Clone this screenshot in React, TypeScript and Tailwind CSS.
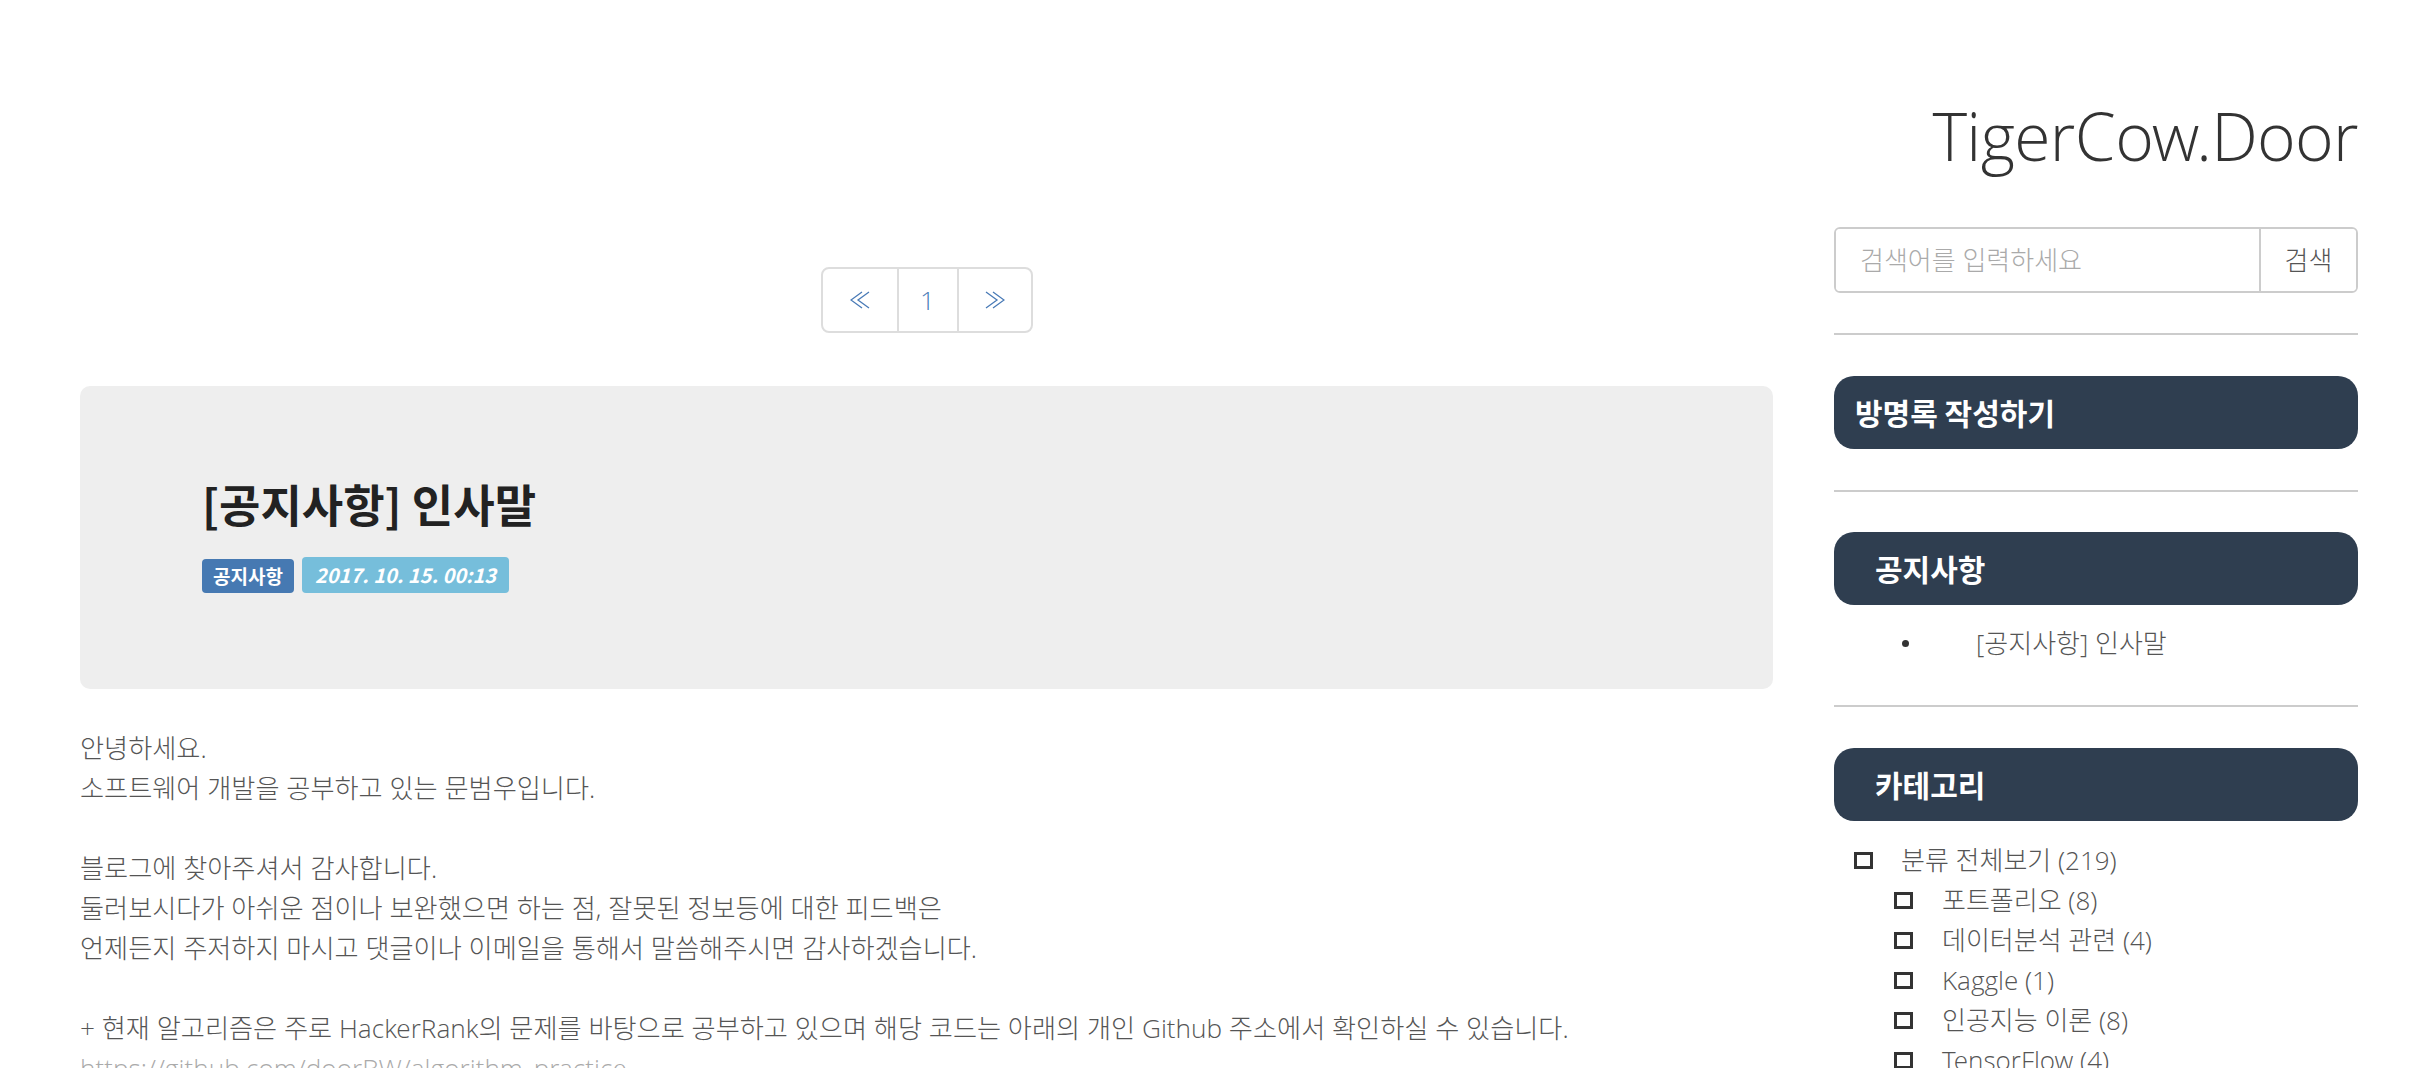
import React from "react";

const FONT = {
  fontFamily:
    '"Open Sans Light", "Open Sans", "Noto Sans CJK KR Light", "Noto Sans CJK KR DemiLight", "Noto Sans CJK KR", sans-serif',
};
const BOLD_KR = { fontFamily: '"Noto Sans CJK KR", sans-serif' };

function Chevrons({ dir }: { dir: "left" | "right" }) {
  const pts =
    dir === "left"
      ? ["12,1 1,9 12,17", "19,1 8,9 19,17"]
      : ["8,1 19,9 8,17", "1,1 12,9 1,17"];
  return (
    <svg width="20" height="18" viewBox="0 0 20 18" fill="none">
      {pts.map((p) => (
        <polyline key={p} points={p} stroke="#4a7bb7" strokeWidth="1.3" />
      ))}
    </svg>
  );
}

function PanelHeader({ title, indent }: { title: string; indent?: boolean }) {
  return (
    <div
      className={`h-[73px] rounded-[20px] bg-[#2f3e50] flex items-center text-white font-bold text-[30px] ${
        indent ? "pl-[41px]" : "pl-[21px]"
      }`}
      style={BOLD_KR}
    >
      {title}
    </div>
  );
}

function Box() {
  return <span className="inline-block w-[19px] h-[17px] border-[3px] border-[#333] shrink-0" />;
}

const categories: { label: string; sub?: boolean }[] = [
  { label: "분류 전체보기 (219)" },
  { label: "포트폴리오 (8)", sub: true },
  { label: "데이터분석 관련 (4)", sub: true },
  { label: "Kaggle (1)", sub: true },
  { label: "인공지능 이론 (8)", sub: true },
  { label: "TensorFlow (4)", sub: true },
  { label: "Python (12)", sub: true },
  { label: "알고리즘 (36)", sub: true },
];

export default function App() {
  return (
    <div className="w-[2412px] h-screen overflow-hidden bg-white text-[#555]" style={FONT}>
      <div className="flex pl-[80px] pr-[54px] gap-[61px]">
        {/* Main column */}
        <main className="flex-1 min-w-0 pt-[267px]">
          <div className="flex justify-center">
            <div className="flex h-[66px] border-2 border-[#ddd] rounded-[8px] overflow-hidden">
              <div className="w-[74px] flex items-center justify-center">
                <Chevrons dir="left" />
              </div>
              <div className="w-[60px] flex items-center justify-center border-l-2 border-[#ddd] text-[26px] font-light text-[#4a7bb7]">
                1
              </div>
              <div className="w-[74px] flex items-center justify-center border-l-2 border-[#ddd]">
                <Chevrons dir="right" />
              </div>
            </div>
          </div>

          <section className="mt-[53px] h-[303px] rounded-[10px] bg-[#eeeeee] pl-[122px] pt-[92px]">
            <h1 className="text-[45px] leading-[52px] font-bold text-[#222]" style={BOLD_KR}>
              [공지사항] 인사말
            </h1>
            <div className="mt-[27px] flex items-end gap-[8px]">
              <span
                className="h-[34px] px-[11px] rounded-[4px] bg-[#4679b2] text-white font-bold text-[19px] flex items-center"
                style={BOLD_KR}
              >
                공지사항
              </span>
              <span
                className="h-[36px] px-[13px] rounded-[4px] bg-[#76bedb] text-white font-bold italic text-[20px] flex items-center"
                style={BOLD_KR}
              >
                2017. 10. 15. 00:13
              </span>
            </div>
          </section>

          <article className="mt-[39px] text-[26.2px] leading-[40px] font-light text-[#555]">
            <p>안녕하세요.</p>
            <p>소프트웨어 개발을 공부하고 있는 문범우입니다.</p>
            <p>&nbsp;</p>
            <p>블로그에 찾아주셔서 감사합니다.</p>
            <p>둘러보시다가 아쉬운 점이나 보완했으면 하는 점, 잘못된 정보등에 대한 피드백은</p>
            <p>언제든지 주저하지 마시고 댓글이나 이메일을 통해서 말씀해주시면 감사하겠습니다.</p>
            <p>&nbsp;</p>
            <p>
              + 현재 알고리즘은 주로 HackerRank의 문제를 바탕으로 공부하고 있으며 해당 코드는 아래의 개인 Github 주소에서
              확인하실 수 있습니다.
            </p>
            <p className="text-[#aaa]">https://github.com/doorBW/algorithm_practice</p>
          </article>
        </main>

        {/* Sidebar */}
        <aside className="w-[524px] shrink-0 pt-[102px]">
          <div
            className="text-right text-[66px] leading-[66px] font-light text-[#333] tracking-[-0.7px]"
            style={{ fontFamily: '"Open Sans Light", "Open Sans", sans-serif' }}
          >
            TigerCow.Door
          </div>

          <div className="mt-[59px] flex h-[66px] border-2 border-[#ccc] rounded-[6px] overflow-hidden">
            <input
              className="flex-1 min-w-0 pl-[24px] text-[26px] font-light outline-none placeholder:text-[#aaa] bg-white"
              style={FONT}
              placeholder="검색어를 입력하세요"
            />
            <button className="w-[97px] border-l-2 border-[#ccc] text-[26px] font-light text-[#555] bg-white" style={FONT}>
              검색
            </button>
          </div>

          <div className="mt-[40px] h-[2px] bg-[#cccccc]" />

          <div className="mt-[41px]">
            <PanelHeader title="방명록 작성하기" />
          </div>

          <div className="mt-[41px] h-[2px] bg-[#cccccc]" />

          <div className="mt-[40px]">
            <PanelHeader title="공지사항" indent />
            <ul className="mt-[18px] text-[26px] leading-[40px] font-light text-[#555]">
              <li className="flex items-center">
                <span className="w-[73px] pl-[68px] shrink-0">
                  <span className="block w-[7px] h-[7px] rounded-full bg-[#333]" />
                </span>
                <span className="ml-[69px]">[공지사항] 인사말</span>
              </li>
            </ul>
          </div>

          <div className="mt-[42px] h-[2px] bg-[#cccccc]" />

          <div className="mt-[41px]">
            <PanelHeader title="카테고리" indent />
            <ul className="mt-[19px] text-[26px] leading-[40px] font-light text-[#555]">
              {categories.map((c) => (
                <li key={c.label} className={`flex items-center ${c.sub ? "pl-[60px]" : "pl-[20px]"}`}>
                  <Box />
                  <span className={c.sub ? "ml-[29px]" : "ml-[28px]"}>{c.label}</span>
                </li>
              ))}
            </ul>
          </div>
        </aside>
      </div>
    </div>
  );
}
